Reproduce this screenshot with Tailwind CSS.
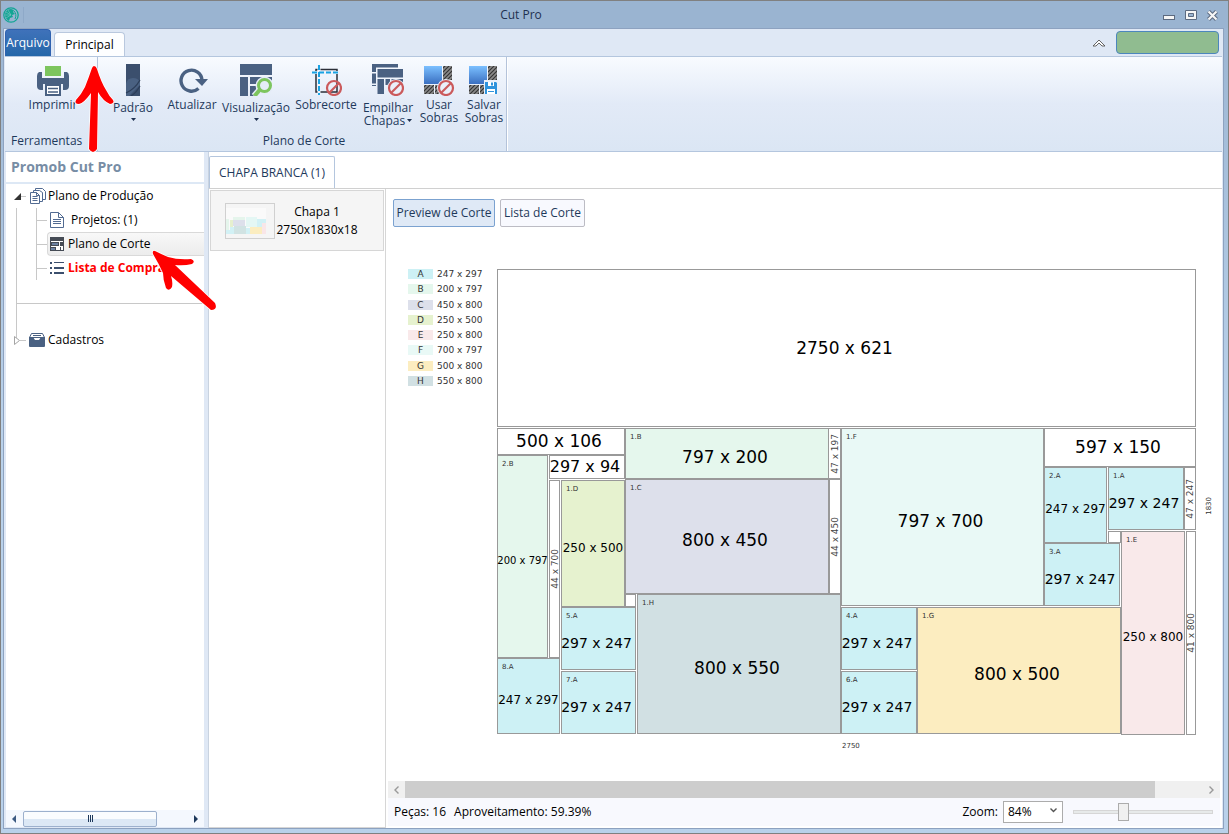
<!DOCTYPE html>
<html lang="pt-BR">
<head>
    <meta charset="UTF-8">
    <title>Cut Pro</title>
    <meta name="viewport" content="width=device-width, initial-scale=1.0">
    <script src="https://cdn.jsdelivr.net/npm/@tailwindcss/browser@4"></script>
</head>
<body class="h-screen overflow-hidden flex flex-col border border-[#808080] bg-linear-to-b from-[#9ab4d1] to-[#b9d1ea] to-50% font-['Segoe_UI','Open_Sans',sans-serif] text-xs text-black">
    <!-- Title bar -->
    <header class="flex h-[27px] shrink-0 items-center bg-[#9ab4d1] pl-[2px] pr-[9px]">
        <svg class="size-4" viewBox="0 0 16 16" fill="none">
            <circle cx="8" cy="8" r="7.2" stroke="#12a594" stroke-width="1.3"/>
            <path d="M8 2C4 2 2 5 2 8c0 3 2 5 4 6l1-3 3-1-1-2 3-1-2-2 1-2z" fill="#12a594"/>
            <path d="M3 5l5 3M5 3l3 5M2 8h6M3 11l5-3" stroke="#7fc4c4" stroke-width=".6"/>
            <path d="M11 4c2 2 2.500 5 1 8" stroke="#12a594" stroke-width="1"/>
        </svg>
        <span class="ml-1 h-4 w-px bg-[#8ea9c8]"></span>
        <h1 class="flex-1 pr-[144px] text-center text-[#1e3050]">Cut Pro</h1>
        <div class="flex items-center gap-[9px]">
            <button aria-label="Minimizar" class="flex h-4 w-[14px] items-center justify-center"><svg class="h-4 w-[14px]" viewBox="0 0 14 16"><rect x="1.500" y="8.500" width="11" height="4" fill="#f6f6f6" stroke="#5c6a80"/></svg></button>
            <button aria-label="Maximizar" class="flex h-4 w-[12px]"><svg class="h-4 w-[12px]" viewBox="0 0 12 16"><path fill-rule="evenodd" d="M.5 3.500h11v9H.5zM3.500 6.500h5v3h-5z" fill="#f6f6f6" stroke="#5c6a80"/></svg></button>
            <button aria-label="Fechar" class="flex h-4 w-[13px]"><svg class="h-4 w-[13px]" viewBox="0 0 13 16"><path d="M2.500 4.500l8 8M10.500 4.500l-8 8" stroke="#5c6a80" stroke-width="4.200"/><path d="M2.500 4.500l8 8M10.500 4.500l-8 8" stroke="#f6f6f6" stroke-width="2.200"/></svg></button>
        </div>
    </header>

    <div class="mr-1 mb-1 ml-[2px] flex min-h-0 flex-1 flex-col border border-[#8da2c0] bg-[#dfe8f5] px-px">
        <!-- Ribbon tabs -->
        <nav class="flex h-[27px] shrink-0 items-end pr-[3px]">
            <button class="h-[27px] w-[46px] rounded-t-sm border border-b-0 border-[#2f62b0] bg-linear-to-b from-[#3f72ba] to-[#2467a9] text-white"><span class="-mx-1">Arquivo</span></button>
            <button class="ml-[3px] h-6 w-[71px] rounded-t border border-b-0 border-[#b9c8de] bg-[#fdfeff]">Principal</button>
            <div class="flex-1"></div>
            <button aria-label="Recolher faixa" class="mr-[10px] self-center"><svg class="h-2 w-[14px]" viewBox="0 0 14 8" fill="none"><path d="M1 7l6-6 6 6H10L7 4 4 7z" fill="#fff" stroke="#555" stroke-width=".9"/></svg></button>
            <button aria-label="Licença" class="mb-[2px] h-[23px] w-[103px] rounded border border-[#4c86bd] bg-[#90bc90]"></button>
        </nav>

        <!-- Ribbon -->
        <section class="flex h-24 shrink-0 border-y border-t-[#b4c6de] border-b-[#b4c6de] bg-linear-to-b from-[#f8fbff] via-[#e2eaf7] to-[#dbe6f4] pl-px text-[#1e395b]">
            <div class="flex w-[92px] flex-col border-r border-[#b4c3da]">
                <button class="mt-[7px] flex flex-col items-center pl-[3px] leading-[13px]">
                    <svg class="size-8" viewBox="0 0 32 32"><path fill="#7dc55e" d="M8 2h16v10H8z"/><path fill="#4a6182" d="M2 8h3v6h22V8h3q2 1 2 4v10q0 4-4 4h-2v-6H6v6H4q-4 0-4-4V12q0-3 2-4z"/><path fill="#fff" stroke="#4a6182" stroke-width="2" d="M9 21h14v10H9z"/><path stroke="#4a6182" stroke-width="1.500" d="M11 24.500h10M11 28h10"/></svg>
                    <span class="mt-[2px]">Imprimir</span>
                </button>
                <h2 class="mt-auto pb-[2px] pl-[5px]">Ferramentas</h2>
            </div>
            <div class="flex flex-col border-r border-[#b4c3da] pl-2 pr-1 shadow-[1px_0_0_#fff]">
                <div class="mt-[7px] flex items-start leading-[13px] whitespace-nowrap">
                    <button class="flex w-[54px] flex-col items-center">
                        <svg class="size-8" viewBox="0 0 32 32"><path fill="#3b4f6d" d="M9 0h14v32H9z"/><path fill="#4a6182" d="M9 20q1-6 7-6 5 0 7 4v3L12 32H9z"/><path fill="none" stroke="#2c3d58" stroke-width="1.200" d="M9 29q9-4 14-13M14 32q5-3 9-10"/></svg>
                        <span class="mt-[5px]">Padrão</span>
                        <svg class="mt-1 h-[3px] w-[5px]" viewBox="0 0 5 3"><path d="M0 0h5L2.500 3z" fill="#1e3050"/></svg>
                    </button>
                    <button class="flex w-16 flex-col items-center">
                        <svg class="size-8" viewBox="0 0 32 32" fill="none"><path d="M22.500 24.500A10.500 10.500 0 1 1 26 16" stroke="#4a6182" stroke-width="3.400"/><path fill="#4a6182" d="M19 15h13l-6 7z"/></svg>
                        <span class="mt-[2px]">Atualizar</span>
                    </button>
                    <button class="flex w-16 flex-col items-center">
                        <svg class="size-8" viewBox="0 0 32 32"><path fill="#4a6182" d="M0 0h32v11H0zM0 13h8v19H0zM10 13h12v7H10zM10 22h6v10h-6zM24 13h8v12h-8z"/><g fill="none"><path d="M14 32l6-7" stroke="#e5ecf8" stroke-width="6"/><circle cx="24.500" cy="21.500" r="6.500" stroke="#e5ecf8" stroke-width="5" fill="#e5ecf8"/><path d="M14.500 32l6-7" stroke="#7dc55e" stroke-width="4"/><circle cx="24.500" cy="21.500" r="6" stroke="#7dc55e" stroke-width="3"/></g></svg>
                        <span class="mt-[5px]">Visualização</span>
                        <svg class="mt-1 h-[3px] w-[5px]" viewBox="0 0 5 3"><path d="M0 0h5L2.500 3z" fill="#1e3050"/></svg>
                    </button>
                    <button class="flex w-[76px] flex-col items-center">
                        <svg class="size-8" viewBox="0 0 32 32" fill="none"><path d="M6 5.500h21V28H6z" stroke="#2b2f38" stroke-width="1.500"/><path d="M9 1v30M2 8.500h28" stroke="#eef3fb" stroke-width="3"/><path d="M9 1v30M2 8.500h28" stroke="#19a3e3" stroke-width="2" stroke-dasharray="5 2"/><circle cx="24" cy="24" r="7" stroke="#cb5a5c" stroke-width="2.200"/><path d="M19 29l10-10" stroke="#cb5a5c" stroke-width="2.200"/></svg>
                        <span class="mt-[2px]">Sobrecorte</span>
                    </button>
                    <button class="flex w-12 flex-col items-center">
                        <svg class="size-8" viewBox="0 0 32 32"><path fill="#4a6182" d="M0 0h26v3.500H4V8H0zM5.500 5H31v8.500H5.500zM0 9.500h4v10H0zM5.500 15H12v15H5.500zM0 21h4v1H0zM13.500 15H18v6h-4.500zM19.500 15H31v4H19.500z"/><circle cx="24" cy="24" r="9" fill="#eaf0fa"/><circle cx="24" cy="24" r="7" stroke="#cb5a5c" stroke-width="2.200" fill="none"/><path d="M19 29l10-10" stroke="#cb5a5c" stroke-width="2.200"/></svg>
                        <span class="mt-[5px]">Empilhar</span>
                        <span class="flex items-center gap-[2px]">Chapas <svg class="h-[3px] w-[5px]" viewBox="0 0 5 3"><path d="M0 0h5L2.500 3z" fill="#1e3050"/></svg></span>
                    </button>
                    <button class="flex w-[54px] flex-col items-center">
                        <svg class="size-8" viewBox="0 0 32 32">
                            <defs>
                                <linearGradient id="sheet" x1="0" y1="0" x2="0" y2="1"><stop offset="0" stop-color="#7bc0ff"/><stop offset="1" stop-color="#3a6fc0"/></linearGradient>
                                <pattern id="hatch" width="4" height="4" patternUnits="userSpaceOnUse"><path d="M0 0h4v4H0z" fill="#8a8a8a"/><path d="M-1 1l2-2M0 4l4-4M3 5l2-2" stroke="#333" stroke-width="1.200"/></pattern>
                            </defs>
                            <path fill="url(#sheet)" d="M1 2h18v18H1z"/><path fill="url(#hatch)" d="M20 2h9v14h-9zM1 21h10v9H1zM12 21h7v9h-7z"/><circle cx="23" cy="24" r="9" fill="#eaf0fa"/><circle cx="23" cy="24" r="7" stroke="#cb5a5c" stroke-width="2.200" fill="none"/><path d="M18 29l10-10" stroke="#cb5a5c" stroke-width="2.200"/>
                        </svg>
                        <span class="mt-[2px]">Usar<br>Sobras</span>
                    </button>
                    <button class="flex w-9 flex-col items-center">
                        <svg class="size-8" viewBox="0 0 32 32"><path fill="url(#sheet)" d="M1 2h18v18H1z"/><path fill="url(#hatch)" d="M20 2h9v14h-9zM1 21h10v9H1zM12 21h7v9h-7z"/><path fill="#eaf0fa" d="M16 16h14v14H16z"/><path fill="#2e93dc" d="M17 18h11l1 1v11H17z"/><path fill="#fff" d="M20 18h6v4h-6zM19 25h8v5h-8z"/><path fill="#2e93dc" d="M23 18.500h2v3h-2zM20 27h6v1h-6z"/></svg>
                        <span class="mt-[2px]">Salvar<br>Sobras</span>
                    </button>
                </div>
                <h2 class="mt-auto pb-[2px] text-center">Plano de Corte</h2>
            </div>
        </section>

        <div class="flex min-h-0 flex-1">
            <!-- Navigation tree -->
            <aside class="ml-px mb-px flex w-[198px] shrink-0 flex-col bg-white">
                <h2 class="h-8 border-b-2 border-[#dde8f5] pl-[5px] text-sm leading-[30px] font-bold text-[#778da5]">Promob Cut Pro</h2>
                <div class="flex-1 overflow-hidden pl-2">
                    <div class="flex h-6 items-center">
                        <button aria-label="Recolher Plano de Produção"><svg class="size-[7px]" viewBox="0 0 7 7"><path d="M7 0v7H0z" fill="#333"/></svg></button>
                        <span class="h-px w-[5px] bg-[#c8c8c8]"></span>
                        <svg class="ml-1 size-4" viewBox="0 0 16 16" fill="#fff" stroke="#526b92"><path d="M5.500.5h7l3 3v8h-10z"/><path d="M3.500 2.500h6l3 2v9h-9z"/><path d="M.5 4.500h6l3 3v8h-9z"/><path d="M2.500 8.500h5M2.500 10.500h5M2.500 12.500h5M6.500 4.500v3h3" fill="none"/></svg>
                        <a href="#" class="ml-[2px]">Plano de Produção</a>
                    </div>
                    <div class="ml-[2px] border-l border-[#c8c8c8] pb-9">
                        <ul class="ml-[19px] border-l border-[#c8c8c8]">
                            <li class="flex h-6 items-center">
                                <span class="h-px w-[10px] bg-[#c8c8c8]"></span>
                                <svg class="ml-[3px] h-4 w-[14px]" viewBox="0 0 14 16" fill="#fff" stroke="#526b92"><path d="M.5.5h8l5 5v10H.5z"/><path d="M8.500.5v5h5M3 7.500h8M3 9.500h8M3 11.500h8" fill="none"/></svg>
                                <a href="#" class="ml-[7px]">Projetos: (1)</a>
                            </li>
                            <li class="flex h-6 items-center">
                                <span class="h-px w-[10px] bg-[#c8c8c8]"></span>
                                <a href="#" class="flex h-6 flex-1 items-center gap-1 rounded-l border border-r-0 border-[#d9d9d9] bg-linear-to-b from-[#f8f8f8] to-[#ececec] pl-[2px]">
                                    <svg class="size-[14px]" viewBox="0 0 14 14"><path fill="#454b55" d="M0 0h14v14H0z"/><path fill="#fff" d="M1 4h12v1H1zM9 5h1v4H9zM1 9h12v1H1zM6 10h1v3H6zM7 10h3v3H7zM11 10h2v3h-2z"/><path fill="#6c82a3" d="M2 6h6v2H2zM1 11h4v2H1z"/></svg>
                                    Plano de Corte
                                </a>
                            </li>
                            <li class="flex h-6 items-center">
                                <span class="h-px w-[10px] bg-[#c8c8c8]"></span>
                                <svg class="ml-[3px] h-3 w-[14px]" viewBox="0 0 14 12" fill="#3b4f6d"><path d="M0 0h2v2H0zM0 5h2v2H0zM0 10h2v2H0zM4 0h10v1H4zM4 5h10v2H4zM4 10h10v2H4z"/></svg>
                                <a href="#" class="ml-1 font-bold text-[#ff0000]">Lista de Compras</a>
                            </li>
                        </ul>
                        <hr class="mt-[23px] border-[#c8c8c8]">
                    </div>
                    <div class="-mt-3 flex h-6 items-center">
                        <button aria-label="Expandir Cadastros"><svg class="h-[9px] w-[6px]" viewBox="0 0 6 9"><path d="M.5.5l5 4-5 4z" fill="#fff" stroke="#a5a5a5"/></svg></button>
                        <span class="h-px w-[6px] bg-[#c8c8c8]"></span>
                        <svg class="ml-[3px] size-4" viewBox="0 0 16 16"><path d="M2.500 1.500h11l2 4H.5z" fill="#fff" stroke="#4a6182"/><path d="M0 5h4l2 3h4l2-3h4v9q0 1-1 1H1q-1 0-1-1z" fill="#4a6182"/><path d="M4 3.500h8" stroke="#4a6182"/></svg>
                        <a href="#" class="ml-[3px]">Cadastros</a>
                    </div>
                </div>
                <div class="flex h-[17px] items-center bg-[#f4f8fe] px-[6px]">
                    <button aria-label="Rolar para a esquerda"><svg class="h-2 w-1" viewBox="0 0 4 8"><path d="M4 0v8L0 4z" fill="#3c5a82"/></svg></button>
                    <div class="ml-[7px] flex h-4 w-[134px] items-center justify-center gap-px rounded-xs border border-[#9cb0cd] bg-linear-to-b from-[#fafcfe] from-50% to-[#dce8f5] to-50%">
                        <span class="h-[7px] w-px bg-[#1e395b]"></span><span class="h-[7px] w-px bg-[#1e395b]"></span><span class="h-[7px] w-px bg-[#1e395b]"></span>
                    </div>
                    <button aria-label="Rolar para a direita" class="ml-auto"><svg class="h-2 w-1" viewBox="0 0 4 8"><path d="M0 0v8l4-4z" fill="#1e395b"/></svg></button>
                </div>
            </aside>

            <main class="ml-1 flex min-w-0 flex-1 flex-col border-l border-[#c9d3e0] bg-white pt-1">
                <div class="flex h-[33px] shrink-0 items-end border-b border-[#d0d0d0]">
                    <button class="h-8 w-[126px] rounded-t-xs border border-b-0 border-[#b4c6de] bg-white text-[#1e395b]">CHAPA BRANCA (1)</button>
                </div>
                <div class="flex min-h-0 flex-1">
                    <!-- Sheets -->
                    <div class="w-[177px] shrink-0 border-r border-b border-[#d6d6d6] p-px">
                        <button class="flex h-[61px] w-full items-center border border-[#d6d6d6] bg-[#f5f5f5] pl-[14px] pr-6">
                            <svg class="h-9 w-[50px] shrink-0 border border-[#d0d0d0]" viewBox="0 0 48 34"><path fill="#fafafa" d="M0 4h40v26H0z"/><path fill="#d2f1f5" d="M0 26h8v4H0zM4 23h4v7H4zM20 24h4v6h-4zM31 15h9v8h-9z"/><path fill="#e5f5ec" d="M0 15h3v11H0zM7 13h12v3H7z"/><path fill="#e6f0cf" d="M4 16h3v7H4z"/><path fill="#dde0eb" d="M7 16h12v6H7z"/><path fill="#d1e3e3" d="M8 22h12v8H8z"/><path fill="#e4f7f4" d="M20 13h11v10H20z"/><path fill="#fbedc0" d="M24 23h12v7H24z"/><path fill="#f9e6e8" d="M36 19h4v11h-4z"/></svg>
                            <span class="flex-1 text-center leading-[18px]">Chapa 1<br>2750x1830x18</span>
                        </button>
                    </div>

                    <section class="flex min-w-0 flex-1 flex-col px-[2px] pb-[2px]">
                        <div class="flex gap-[5px] pt-[10px] pl-[5px] text-[#1e395b]">
                            <button class="h-7 w-[102px] rounded-xs border border-[#7ba2d0] bg-[#dfe9f6] whitespace-nowrap">Preview de Corte</button>
                            <button class="h-7 w-[85px] rounded-xs border border-[#bcbcc4] bg-[#f8f9fe] whitespace-nowrap">Lista de Corte</button>
                        </div>

                        <div class="flex min-h-0 flex-1 items-start overflow-hidden pt-[42px] pl-5 font-[Verdana,'DejaVu_Sans',sans-serif]">
                            <ul id="legend" class="flex h-[117px] w-[89px] shrink-0 flex-col justify-between text-[9px] leading-[10px] text-[#333]"></ul>
                            <div id="sheet-view" class="relative h-[466px] w-[699px] shrink-0"></div>
                            <div class="self-stretch pt-[228px] pl-[9px] text-[7px] leading-[8px] text-[#333]"><span class="block rotate-180 [writing-mode:vertical-rl]">1830</span></div>
                        </div>

                        <div class="flex h-[17px] shrink-0 bg-[#f0f0f0]">
                            <button aria-label="Rolar para a esquerda" class="flex w-[17px] items-center justify-center"><svg class="h-2 w-[5px]" viewBox="0 0 5 8" fill="none"><path d="M4.500.5L1 4l3.500 3.500" stroke="#999" stroke-width="1.400"/></svg></button>
                            <div class="flex flex-1"><div class="w-[94%] bg-[#cdcdcd]"></div></div>
                            <button aria-label="Rolar para a direita" class="flex w-[17px] items-center justify-center"><svg class="h-2 w-[5px]" viewBox="0 0 5 8" fill="none"><path d="M.5.5L4 4 .5 7.500" stroke="#999" stroke-width="1.400"/></svg></button>
                        </div>
                        <footer class="flex h-7 shrink-0 items-center bg-[#f8f9fe] pl-[6px] pr-[7px]">
                            <span>Peças: 16</span>
                            <span class="ml-2">Aproveitamento: 59.39%</span>
                            <label for="zoom" class="ml-auto">Zoom:</label>
                            <div class="relative ml-[5px]">
                                <select id="zoom" class="block h-[22px] w-[60px] appearance-none border border-[#acacac] bg-white pl-1">
                                    <option>84%</option>
                                    <option>100%</option>
                                </select>
                                <svg class="pointer-events-none absolute top-[7px] right-[6px] h-[5px] w-[7px]" viewBox="0 0 7 5" fill="none"><path d="M.5.5l3 3 3-3" stroke="#555" stroke-width="1.400"/></svg>
                            </div>
                            <input type="range" aria-label="Zoom" min="0" max="100" value="35" class="ml-[10px] h-[18px] w-[140px] appearance-none bg-transparent [&::-webkit-slider-runnable-track]:h-1 [&::-webkit-slider-runnable-track]:border [&::-webkit-slider-runnable-track]:border-[#d6d6d6] [&::-webkit-slider-runnable-track]:bg-[#e7eaea] [&::-webkit-slider-thumb]:-mt-2 [&::-webkit-slider-thumb]:h-[18px] [&::-webkit-slider-thumb]:w-[11px] [&::-webkit-slider-thumb]:appearance-none [&::-webkit-slider-thumb]:border [&::-webkit-slider-thumb]:border-[#acacac] [&::-webkit-slider-thumb]:bg-[#f0f0f0]">
                        </footer>
                    </section>
                </div>
            </main>
        </div>
    </div>

    <!-- Callout arrows -->
    <svg class="pointer-events-none absolute top-0 left-0 h-[320px] w-[230px]" viewBox="0 0 230 320" fill="#ff0000" stroke="#fff" stroke-width="1.500" paint-order="stroke">
        <path d="M94 66Q96 66 97 69Q101 82 106 90Q109 96 113 100Q115 103 110 104Q103 101 98 92L97 149Q93 155 89 149L91 93Q84 103 79 104Q74 104 76 100Q81 95 85 87Q89 77 92 68Q93 66 94 66Z"/>
        <path d="M155 251Q161 254 168 257Q178 260 191 259Q196 261 192 264Q184 266 175 265L215 303Q218 310 211 310L171 276Q173 282 172 287Q169 292 166 288Q163 280 163 273Q159 264 153 254Q152 250 155 251Z"/>
    </svg>

    <script>
        var colors = {
            A: '#cdf1f5', B: '#e5f7ed', C: '#dde0eb', D: '#e6f2cf',
            E: '#f9e9ea', F: '#e9f9f6', G: '#fcedc0', H: '#d1e0e3'
        };
        var sizes = {
            A: '247 x 297', B: '200 x 797', C: '450 x 800', D: '250 x 500',
            E: '250 x 800', F: '700 x 797', G: '500 x 800', H: '550 x 800'
        };
        // left, top, width, height, text, font size, tag
        var pieces = [
            [0, 0, 699, 158, '2750 x 621', 17],
            [0, 159, 128, 27, '500 x 106', 17],
            [52, 186, 76, 24, '297 x 94', 16],
            [0, 186, 51, 203, '200 x 797', 10, '2.B'],
            [52, 211, 11, 178, '44 x 700', 9],
            [64, 211, 64, 127, '250 x 500', 12, '1.D'],
            [128, 159, 204, 51, '797 x 200', 17, '1.B'],
            [331, 159, 13, 51, '47 x 197', 9],
            [128, 210, 204, 115, '800 x 450', 17, '1.C'],
            [332, 210, 12, 115, '44 x 450', 9],
            [128, 325, 11, 13, '', 9],
            [140, 325, 204, 140, '800 x 550', 17, '1.H'],
            [64, 338, 75, 63, '297 x 247', 14, '5.A'],
            [64, 402, 75, 63, '297 x 247', 14, '7.A'],
            [0, 389, 63, 76, '247 x 297', 12, '8.A'],
            [344, 159, 203, 178, '797 x 700', 17, '1.F'],
            [547, 159, 152, 39, '597 x 150', 17],
            [547, 198, 63, 76, '247 x 297', 12, '2.A'],
            [611, 198, 76, 63, '297 x 247', 14, '1.A'],
            [687, 198, 12, 63, '47 x 247', 9],
            [611, 262, 13, 12, '', 9],
            [547, 274, 76, 63, '297 x 247', 14, '3.A'],
            [624, 262, 64, 204, '250 x 800', 12, '1.E'],
            [689, 262, 10, 204, '41 x 800', 9],
            [344, 338, 76, 63, '297 x 247', 14, '4.A'],
            [344, 402, 76, 63, '297 x 247', 14, '6.A'],
            [420, 338, 204, 127, '800 x 500', 17, '1.G']
        ];

        document.getElementById('legend').innerHTML = Object.keys(colors).map(k => `
            <li class="flex items-center gap-1 whitespace-nowrap">
                <span class="w-[25px] text-center" style="background:${colors[k]}">${k}</span>${sizes[k]}
            </li>`).join('');

        document.getElementById('sheet-view').innerHTML = pieces.map(([x, y, w, h, text, size, tag]) => `
            <div class="absolute flex items-center justify-center border border-[#999] whitespace-nowrap ${tag ? 'pt-2' : ''} ${size > 12 ? 'pr-1' : ''}"
                 style="left:${x}px;top:${y}px;width:${w}px;height:${h}px;font-size:${size}px;background:${tag ? colors[tag[2]] : '#fff'}">
                ${tag ? `<span class="absolute top-1 left-1 text-[7px] leading-[8px] text-[#333]">${tag}</span>` : ''}
                <span class="${w < 14 ? 'rotate-180 leading-[10px] text-[#444] [writing-mode:vertical-rl]' : 'leading-none'}">${text}</span>
            </div>`).join('') + '<span class="absolute top-[473px] left-[345px] text-[7px] leading-[8px] text-[#333]">2750</span>';
    </script>
</body>
</html>
